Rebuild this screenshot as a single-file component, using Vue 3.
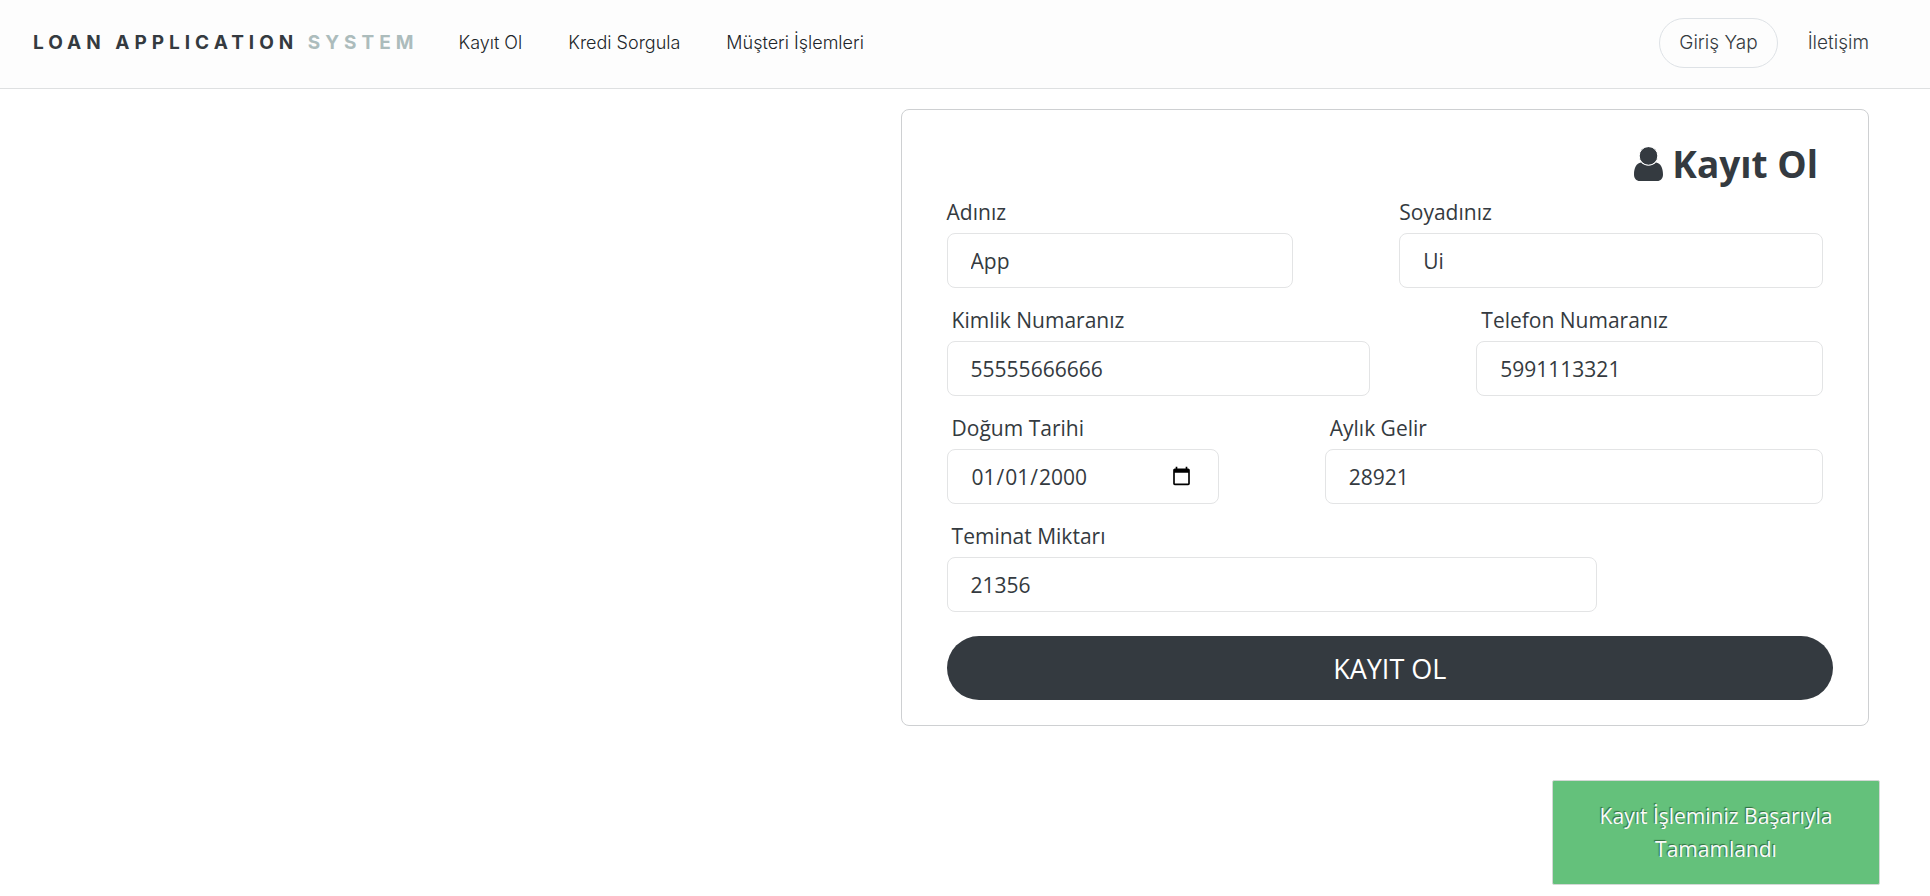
<script setup>
import { reactive } from 'vue'

const links = ['Kayıt Ol', 'Kredi Sorgula', 'Müşteri İşlemleri']

const rows = [
  {
    layout: 'narrow-wide',
    fields: [
      { id: 'ad', label: 'Adınız', type: 'text' },
      { id: 'soyad', label: 'Soyadınız', type: 'text' },
    ],
  },
  {
    layout: 'wide-narrow indented',
    fields: [
      { id: 'kimlik', label: 'Kimlik Numaranız', type: 'text' },
      { id: 'telefon', label: 'Telefon Numaranız', type: 'text' },
    ],
  },
  {
    layout: 'date-row indented',
    fields: [
      { id: 'dogum', label: 'Doğum Tarihi', type: 'date' },
      { id: 'gelir', label: 'Aylık Gelir', type: 'text' },
    ],
  },
  {
    layout: 'single indented',
    fields: [{ id: 'teminat', label: 'Teminat Miktarı', type: 'text' }],
  },
]

const form = reactive({
  ad: 'App',
  soyad: 'Ui',
  kimlik: '55555666666',
  telefon: '5991113321',
  dogum: '2000-01-01',
  gelir: '28921',
  teminat: '21356',
})
</script>

<template>
  <div class="page">
    <header class="navbar">
      <a class="brand" href="#">LOAN APPLICATION <span>SYSTEM</span></a>
      <nav class="links">
        <a v-for="link in links" :key="link" href="#">{{ link }}</a>
      </nav>
      <div class="actions">
        <button type="button" class="login">Giriş Yap</button>
        <a href="#">İletişim</a>
      </div>
    </header>

    <main class="content">
      <form class="card" @submit.prevent>
        <h1 class="title">
          <svg class="user" viewBox="0 0 29 34" aria-hidden="true">
            <path
              d="M22 15.500C20.200 17.400 17.500 18.400 14.500 18.400S8.800 17.400 7 15.500C2.400 16.200 0 20.800 0 27.500C0 31.500 2.400 34 5.800 34H23.200C26.600 34 29 31.500 29 27.500C29 20.800 26.600 16.200 22 15.500Z"
            />
            <circle class="head" cx="14.500" cy="8.900" r="9.300" />
          </svg>
          Kayıt Ol
        </h1>

        <div v-for="row in rows" :key="row.layout" class="row" :class="row.layout">
          <div v-for="f in row.fields" :key="f.id" class="field">
            <label :for="f.id">{{ f.label }}</label>
            <input :id="f.id" v-model="form[f.id]" :type="f.type" />
          </div>
        </div>

        <button type="submit" class="submit">KAYIT OL</button>
      </form>
    </main>

    <div class="toast" role="status">Kayıt İşleminiz Başarıyla Tamamlandı</div>
  </div>
</template>

<style>
body {
  margin: 0;
  background: #fff;
}
</style>

<style scoped>
.page {
  min-height: 100vh;
  box-sizing: border-box;
  font-family: 'Open Sans', 'Noto Sans', sans-serif;
  color: #343a40;
}

a {
  color: inherit;
  text-decoration: none;
}

.navbar {
  display: flex;
  align-items: center;
  box-sizing: border-box;
  height: 89px;
  padding: 0 61px 3px 33px;
  background: #fdfdfd;
  border-bottom: 1px solid #dee0e1;
  font-family: Inter, sans-serif;
}

.brand {
  font-size: 19px;
  font-weight: 700;
  letter-spacing: 5px;
  white-space: nowrap;
}

.brand span {
  color: #acbcbc;
}

.links {
  display: flex;
  gap: 46px;
  margin-left: 40px;
  font-size: 18px;
  font-weight: 300;
  color: #212529;
  white-space: nowrap;
}

.actions {
  display: flex;
  align-items: center;
  gap: 30px;
  margin-left: auto;
  font-size: 19px;
  font-weight: 300;
}

.login {
  height: 50px;
  padding: 0 19px;
  border: 1px solid #dee2e6;
  border-radius: 25px;
  background: transparent;
  color: inherit;
  font: inherit;
}

.content {
  display: grid;
  grid-template-columns: 93fr 100fr;
  padding: 20px 61px 20px 0;
}

.card {
  grid-column: 2;
  box-sizing: border-box;
  padding: 24px 35px 25px 45px;
  border: 1px solid #ced0d2;
  border-radius: 8px;
  background: #fff;
}

.title {
  display: flex;
  align-items: center;
  justify-content: flex-end;
  gap: 9px;
  margin: 0 15px 2px 0;
  font-size: 37px;
  font-weight: 700;
  line-height: 60px;
}

.user {
  width: 29px;
  height: 34px;
  fill: #343a40;
}

.head {
  stroke: #fff;
  stroke-width: 1px;
}

.row {
  display: grid;
  column-gap: 106px;
  margin: 0 10px 16px 0;
}

.narrow-wide {
  grid-template-columns: 45fr 55fr;
}

.wide-narrow {
  grid-template-columns: 55fr 45fr;
}

.date-row {
  grid-template-columns: 272fr 498fr;
}

.single {
  grid-template-columns: 65fr 12fr;
}

.field {
  display: flex;
  flex-direction: column;
  gap: 5px;
  min-width: 0;
}

.field label {
  font-size: 21px;
  line-height: 32px;
}

.indented label {
  padding-left: 5px;
}

.field input {
  box-sizing: border-box;
  width: 100%;
  height: 55px;
  padding: 0 24px 0 23px;
  border: 1px solid #e3e4e5;
  border-radius: 8px;
  background: #fff;
  color: #343a40;
  font: inherit;
  font-size: 21px;
}

.submit {
  display: block;
  width: 100%;
  height: 64px;
  margin-top: 24px;
  padding: 0;
  border: 0;
  border-radius: 32px;
  background: #343a40;
  color: #fff;
  font: inherit;
  font-size: 27px;
}

.toast {
  position: fixed;
  right: 50px;
  bottom: 11px;
  box-sizing: border-box;
  width: 328px;
  padding: 19px 32px 18px;
  border: 1px solid #d3d8d5;
  border-radius: 2px;
  background: #64c17b;
  color: #fafafa;
  font-size: 21px;
  line-height: 33px;
  text-align: center;
  text-shadow: -1px -1px 1px #2f6b3d;
}
</style>
